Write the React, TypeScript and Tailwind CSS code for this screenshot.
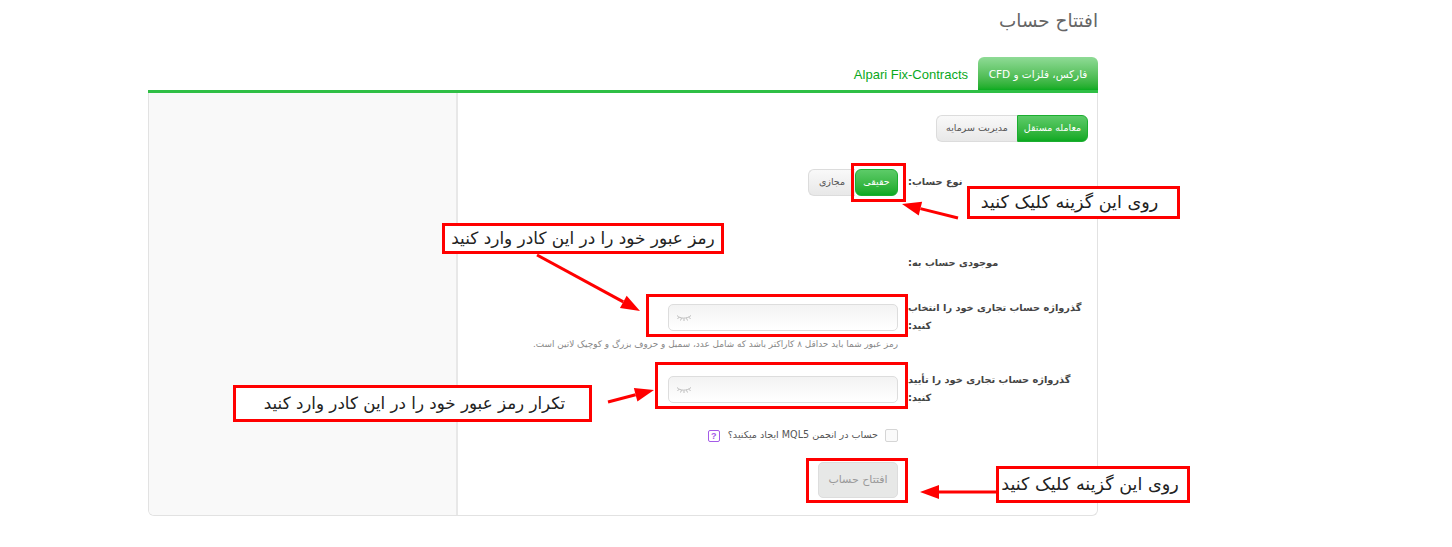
import React from "react";

const EyeClosed = () => (
  <svg width="16" height="10" viewBox="0 0 16 10" fill="none" stroke="#bdbdbd" strokeWidth="1">
    <path d="M1 2.5C4 6 11 6 15 2.5" />
    <path d="M3 4.2L1.5 6M5.5 5.2L4.5 7.5M8 5.6V8M10.5 5.2L11.5 7.5M13 4.2L14.5 6" />
  </svg>
);

const Box = ({ cls, children }: { cls: string; children?: React.ReactNode }) => (
  <div dir="rtl" className={"absolute border-[3px] border-[#ff0000] flex items-center justify-center text-[#222] whitespace-nowrap " + cls}>
    {children}
  </div>
);

const Arrow = ({ x1, y1, x2, y2 }: { x1: number; y1: number; x2: number; y2: number }) => {
  const a = Math.atan2(y2 - y1, x2 - x1);
  const L = 19;
  const W = 7;
  const bx = x2 - L * Math.cos(a);
  const by = y2 - L * Math.sin(a);
  const px = -Math.sin(a) * W;
  const py = Math.cos(a) * W;
  return (
    <g>
      <line x1={x1} y1={y1} x2={bx} y2={by} stroke="#ff0000" strokeWidth="3" />
      <polygon points={`${x2},${y2} ${bx + px},${by + py} ${bx - px},${by - py}`} fill="#ff0000" />
    </g>
  );
};

const PwInput = () => (
  <div className="w-[230px] h-[27px] ml-auto mt-[6px] rounded-[5px] border border-[#dddddd] bg-gradient-to-b from-[#f3f3f3] to-[#ffffff] flex items-center pl-[7px]">
    <EyeClosed />
  </div>
);

const Label = ({ children }: { children: React.ReactNode }) => (
  <div dir="rtl" className="text-left pt-[1px] -mb-[1px] text-[9.8px] leading-[18px] font-bold text-[#444]">
    {children}
  </div>
);

export default function App() {
  return (
    <div className="relative w-[1452px] h-[547px] bg-white overflow-hidden font-['DejaVu_Sans',sans-serif]">
      <div className="w-[950px] ml-[148px]">
        <h1 dir="rtl" className="h-[57px] pt-[9px] text-[18.4px] leading-[24px] font-normal text-[#666]">
          افتتاح حساب
        </h1>
        <div className="flex justify-end items-stretch h-[33px]">
          <div className="flex items-center pt-[2px] pr-[10px] text-[13px] text-[#09a81d] font-['Liberation_Sans',sans-serif]">Alpari Fix-Contracts</div>
          <div dir="rtl" className="w-[120px] pt-[2px] rounded-t-[6px] bg-gradient-to-b from-[#8fdb96] to-[#08ab20] flex items-center justify-center text-[10.5px] text-white whitespace-nowrap">
            فارکس، فلزات و CFD
          </div>
        </div>
        <div className="h-[3px] bg-[#2fbf45]" />
        <div className="flex h-[423px] border border-t-0 border-[#e2e2e2] rounded-b-[6px] overflow-hidden">
          <aside className="w-[309px] bg-[#f9f9f9] border-r-2 border-[#e8e8e8]" />
          <main className="flex-1 pl-[10px]">
            <div className="flex justify-end pr-[9px] pt-[22px]">
              <div dir="rtl" className="flex h-[27px] text-[9.5px] whitespace-nowrap">
                <div className="w-[71px] rounded-r-[6px] bg-gradient-to-b from-[#5ccb68] to-[#0aa921] border border-[#1cae30] text-white flex items-center justify-center">معامله مستقل</div>
                <div className="w-[81px] rounded-l-[6px] bg-gradient-to-b from-[#f9f9f9] to-[#e8e8e8] border border-r-0 border-[#dcdcdc] text-[#555] flex items-center justify-center">مدیریت سرمایه</div>
              </div>
            </div>
            <div className="grid grid-cols-[430px_180px] mt-[27px]">
              <div dir="rtl" className="flex justify-start h-[27px] text-[9.5px] whitespace-nowrap">
                <div className="w-[43px] rounded-[6px] bg-gradient-to-b from-[#5ccb68] to-[#0aa921] border border-[#1cae30] text-white flex items-center justify-center">حقیقی</div>
                <div className="w-[47px] rounded-l-[6px] bg-gradient-to-b from-[#f9f9f9] to-[#e8e8e8] border border-r-0 border-[#dcdcdc] text-[#555] flex items-center justify-center">مجازی</div>
              </div>
              <div className="ml-[10px] -mr-[10px] pt-[3px] h-[27px]"><Label>نوع حساب:</Label></div>
            </div>
            <div className="grid grid-cols-[430px_180px] mt-[57px]">
              <div />
              <div className="ml-[10px] -mr-[10px]"><Label>موجودی حساب به:</Label></div>
            </div>
            <div className="grid grid-cols-[430px_180px] mt-[27px]">
              <div>
                <PwInput />
                <div dir="rtl" className="mt-[6px] h-[14px] text-[8.9px] leading-[14px] text-[#888] whitespace-nowrap">
                  رمز عبور شما باید حداقل ۸ کاراکتر باشد که شامل عدد، سمبل و حروف بزرگ و کوچیک لاتین است.
                </div>
              </div>
              <div className="ml-[10px] -mr-[10px]"><Label>گذرواژه حساب تجاری خود را انتخاب کنید:</Label></div>
            </div>
            <div className="grid grid-cols-[430px_180px] mt-[19px]">
              <div><PwInput /></div>
              <div className="ml-[10px] -mr-[10px]"><Label>گذرواژه حساب تجاری خود را تأیید کنید:</Label></div>
            </div>
            <div className="w-[430px] mt-[23px] flex justify-start items-center h-[13px]" dir="rtl">
              <div className="w-[13px] h-[13px] rounded-[2px] border border-[#d5d5d5] bg-[#fafafa] shrink-0" />
              <span className="mr-[7px] text-[9.6px] text-[#555] whitespace-nowrap">حساب در انجمن MQL5 ایجاد میکنید؟</span>
              <span className="mr-[8px] w-[12px] h-[12px] rounded-[2px] border border-[#a45be8] text-[9px] font-bold leading-[10px] text-center text-[#a45be8] shrink-0 font-['Liberation_Sans',sans-serif]">?</span>
            </div>
            <div className="w-[430px] mt-[20px] flex justify-end">
              <button dir="rtl" className="w-[80px] h-[36px] rounded-[5px] bg-[#e7e8e7] border border-[#dddddd] text-[11px] text-[#999] whitespace-nowrap">افتتاح حساب</button>
            </div>
          </main>
        </div>
      </div>

      <svg className="absolute left-0 top-0 pointer-events-none" width="1452" height="547">
        <Arrow x1={958} y1={218} x2={902} y2={204} />
        <Arrow x1={537} y1={255} x2={640} y2={311} />
        <Arrow x1={608} y1={402} x2={654} y2={390} />
        <Arrow x1={997} y1={492} x2={920} y2={492} />
      </svg>

      <Box cls="left-[851px] top-[163px] w-[55px] h-[39px]" />
      <Box cls="left-[646px] top-[294px] w-[262px] h-[43px]" />
      <Box cls="left-[655px] top-[362px] w-[253px] h-[47px]" />
      <Box cls="left-[806px] top-[458px] w-[102px] h-[45px]" />

      <Box cls="left-[967px] top-[186px] w-[213px] h-[33px] bg-white text-[17.6px] pr-[8px]">روی این گزینه کلیک کنید</Box>
      <Box cls="left-[442px] top-[223px] w-[282px] h-[31px] bg-white text-[16.9px]">رمز عبور خود را در این کادر وارد کنید</Box>
      <Box cls="left-[233px] top-[385px] w-[359px] h-[37px] bg-white text-[16.7px] pl-[4px]">تکرار رمز عبور خود را در این کادر وارد کنید</Box>
      <Box cls="left-[996px] top-[466px] w-[194px] h-[37px] bg-white text-[17.6px] pr-[6px]">روی این گزینه کلیک کنید</Box>
    </div>
  );
}
